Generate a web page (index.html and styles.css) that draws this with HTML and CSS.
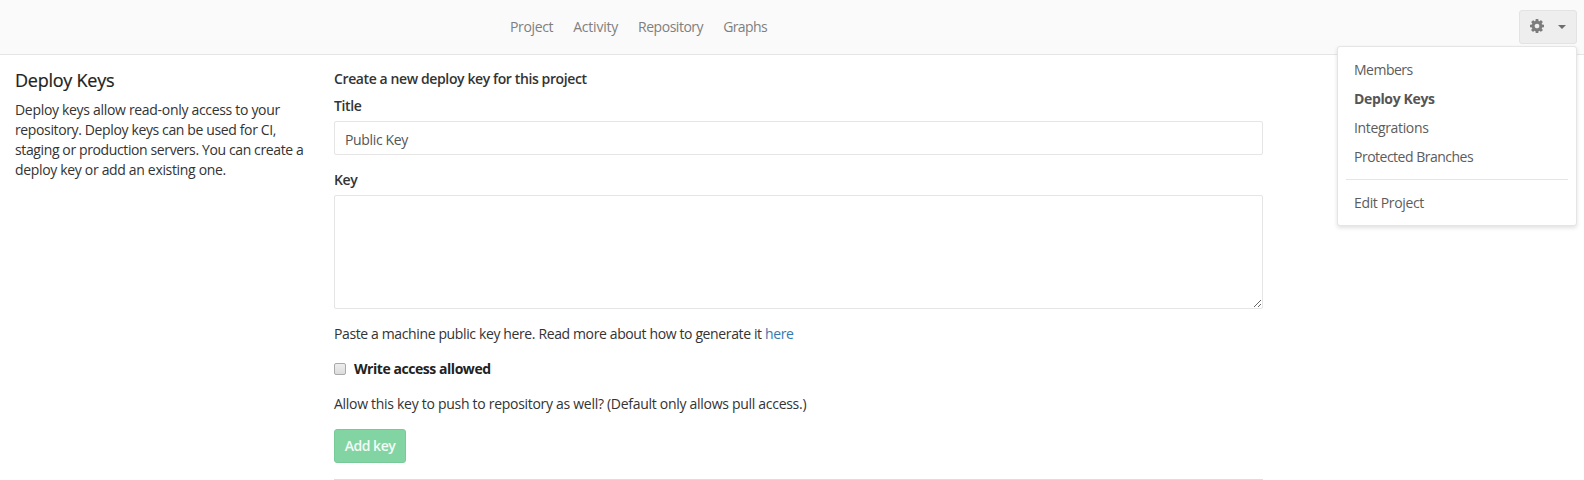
FILE: index.html
```html
<!DOCTYPE html>
<html lang="en">
<head>
<meta charset="utf-8">
<title>Deploy Keys</title>
<link rel="stylesheet" href="styles.css">
</head>
<body>
<header class="topbar">
  <nav class="nav">
    <a class="nav-project">Project</a>
    <a class="nav-activity">Activity</a>
    <a class="nav-repository">Repository</a>
    <a class="nav-graphs">Graphs</a>
  </nav>
  <div class="settings">
    <button class="settings-btn" type="button" aria-label="Settings">
      <svg class="gear" viewBox="0 0 1536 1536" width="14" height="14"><path fill="#7c7c7c" fill-rule="evenodd" d="M1024 768q0-106-75-181t-181-75-181 75-75 181 75 181 181 75 181-75 75-181zm512-109v222q0 12-8 23t-20 13l-185 28q-19 54-39 91 35 50 107 138 10 12 10 25t-9 23q-27 37-99 108t-94 71q-12 0-26-9l-138-108q-44 23-91 38-16 136-29 186-7 28-36 28H657q-14 0-24.500-8.500T621 1506l-28-184q-49-16-90-37l-141 107q-10 9-25 9-14 0-25-11-126-114-165-168-7-10-7-23 0-12 8-23 15-21 51-66.500t54-70.500q-27-50-41-99L29 913q-13-2-21-12.500T0 877V655q0-12 8-23t19-13l186-28q14-46 39-92-40-57-107-138-10-12-10-24 0-10 9-23 26-36 98.500-107.500T337 135q13 0 26 10l138 107q44-23 91-38 16-136 29-186 7-28 36-28h222q14 0 24.500 8.500T915 30l28 184q49 16 90 37l142-107q9-9 24-9 13 0 25 10 129 119 165 170 7 8 7 22 0 12-8 23-15 21-51 66.500t-54 70.500q26 50 41 98l183 28q13 2 21 12.500t8 23.500z"/></svg>
      <span class="caret"></span>
    </button>
    <ul class="menu">
      <li class="m-members">Members</li>
      <li class="active">Deploy Keys</li>
      <li class="m-integrations">Integrations</li>
      <li class="m-branches">Protected Branches</li>
      <li class="divider"></li>
      <li class="m-edit">Edit Project</li>
    </ul>
  </div>
</header>
<main class="page">
  <aside class="intro">
    <h4><span>Deploy Keys</span></h4>
    <p><span class="i1">Deploy keys allow read-only access to your</span><br><span class="i2">repository. Deploy keys can be used for CI,</span><br><span class="i3">staging or production servers. You can create a</span><br><span class="i4">deploy key or add an existing one.</span></p>
  </aside>
  <form class="form">
    <h5><span>Create a new deploy key for this project</span></h5>
    <label class="field-label l-title" for="title">Title</label>
    <input class="control" id="title" type="text" value="Public Key">
    <label class="field-label l-key" for="key">Key</label>
    <textarea class="control area" id="key"></textarea>
    <p class="paste"><span>Paste a machine public key here. Read more about how to generate it <a class="link">here</a></span></p>
    <label class="check"><input class="box" type="checkbox"><span>Write access allowed</span></label>
    <p class="allow"><span>Allow this key to push to repository as well? (Default only allows pull access.)</span></p>
    <button class="submit" type="button">Add key</button>
    <hr class="rule">
  </form>
</main>
</body>
</html>
```
FILE: styles.css
```css
* { box-sizing: border-box; }
body {
  margin: 0;
  height: 480px;
  overflow: hidden;
  background: #fff;
  color: #333;
  font: 14px/20px "Open Sans", "Noto Sans", sans-serif;
  letter-spacing: -.35px;
}
p, h4, h5, ul { margin: 0; padding: 0; }
.topbar {
  display: flex;
  justify-content: space-between;
  height: 55px;
  padding: 10px 7px 0 510px;
  background: #fafafa;
  border-bottom: 1px solid #e5e5e5;
}
.nav { display: flex; gap: 20px; padding-top: 7px; color: #7f7f7f; }
.nav-activity { letter-spacing: -.22px; }
.nav-repository { letter-spacing: -.48px; }
.nav-graphs { letter-spacing: -.6px; }
.settings { position: relative; }
.settings-btn {
  display: flex;
  align-items: center;
  gap: 14px;
  width: 58px;
  height: 34px;
  padding: 0 10px;
  background: #eee;
  border: 1px solid #e3e3e3;
  border-radius: 3px;
}
.gear { flex: none; margin-top: -2px; }
.caret { border: 4px solid transparent; border-top-color: #6d6d6d; border-bottom: 0; }
.menu {
  position: absolute;
  top: 36px;
  right: 0;
  width: 240px;
  height: 180px;
  padding: 9px 8px;
  background: #fff;
  border: 1px solid #e5e5e5;
  border-radius: 3px;
  box-shadow: 0 2px 4px rgba(0, 0, 0, .12);
  color: #5c5c5c;
  list-style: none;
}
.menu li { height: 29px; padding: 4px 8px 5px; white-space: nowrap; }
.menu .m-members, .menu .m-branches { letter-spacing: -.5px; }
.menu .active { font-weight: 700; color: #555; }
.menu .divider { height: 1px; margin: 7px 0 9px; padding: 0; background: #e5e5e5; }
.page { display: grid; grid-template-columns: 319px 929px; padding-left: 15px; }
.intro { padding-top: 13px; white-space: nowrap; }
.intro h4 { height: 32px; font-size: 18px; line-height: 24px; font-weight: 400; letter-spacing: -.25px; color: #222; -webkit-text-stroke: .2px #222; }
.i1 { letter-spacing: -.31px; }
.i2 { letter-spacing: -.37px; }
.i4 { letter-spacing: -.33px; }
.i3 { letter-spacing: -.38px; }
.form { display: flex; flex-direction: column; align-items: flex-start; padding-top: 14px; white-space: nowrap; }
.form h5 { height: 27px; font-size: 14px; font-weight: 600; letter-spacing: -.39px; color: #333; }
.field-label { height: 25px; font-weight: 600; letter-spacing: -.4px; }
.control {
  width: 929px;
  height: 34px;
  margin: 0 0 15px;
  padding: 7px 10px 5px;
  border: 1px solid #e5e5e5;
  border-radius: 2px;
  background: #fff;
  color: #555;
  font: inherit;
  letter-spacing: inherit;
}
.area { height: 114px; margin-bottom: 15px; resize: vertical; }
.paste { height: 35px; letter-spacing: -.375px; }
.link { color: #3777b0; }
.check { display: flex; align-items: center; gap: 8px; height: 20px; margin-bottom: 15px; font-weight: 700; letter-spacing: -.45px; color: #222; }
.box {
  appearance: none;
  width: 12px;
  height: 12px;
  margin: 0;
  border: 1px solid #aaa;
  border-radius: 2px;
  background: linear-gradient(#eee, #dcdcdc);
}
.allow { height: 35px; letter-spacing: -.29px; }
.submit {
  width: 72px;
  height: 34px;
  padding: 0;
  background: #82d4a3;
  border: 1px solid #78cb99;
  border-radius: 3px;
  color: #f3fbf6;
  font: 600 14px/20px "Open Sans", sans-serif;
  letter-spacing: -.5px;
}
.rule { width: 929px; height: 1px; margin: 16px 0 0; border: 0; background: #ddd; }
```
